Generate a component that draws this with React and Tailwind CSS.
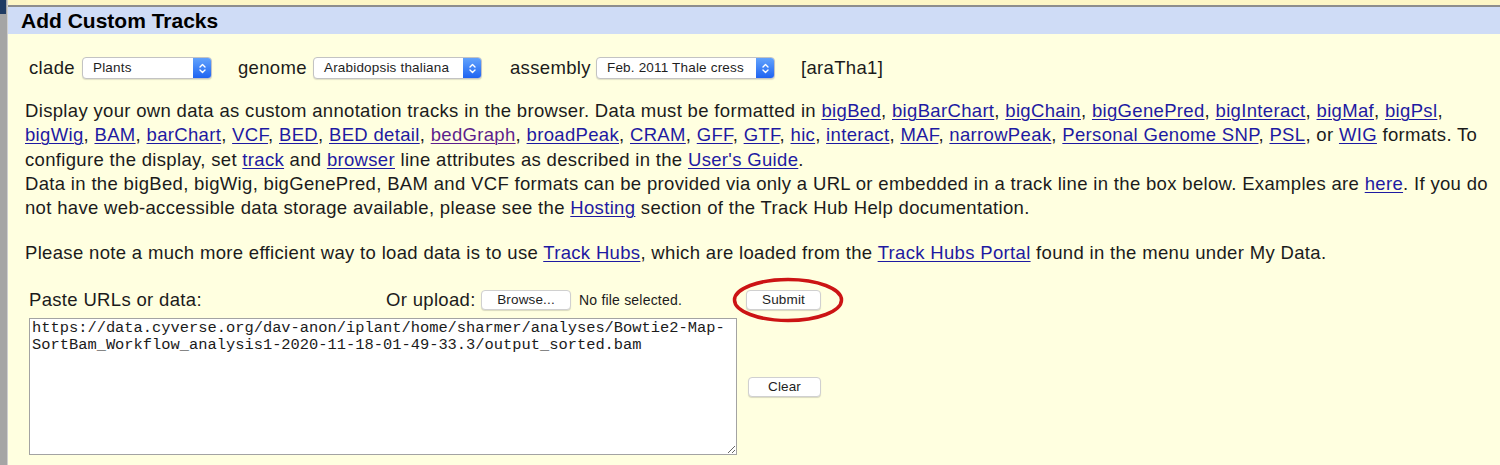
import React from "react";

const FONT = { fontFamily: '"Liberation Sans", Arial, Helvetica, sans-serif' };

function L({ children, v }) {
  return (
    <a
      href="#"
      className={
        v
          ? "text-[#5d1f8d] underline decoration-1 underline-offset-2"
          : "text-[#1e1aa2] underline decoration-1 underline-offset-2"
      }
    >
      {children}
    </a>
  );
}

function Chevrons() {
  return (
    <svg width="9" height="13" viewBox="0 0 9 13" fill="none">
      <path d="M2 5 L4.5 2.5 L7 5" stroke="white" strokeWidth="1.4" strokeLinecap="round" strokeLinejoin="round" />
      <path d="M2 8 L4.5 10.5 L7 8" stroke="white" strokeWidth="1.4" strokeLinecap="round" strokeLinejoin="round" />
    </svg>
  );
}

function MacSelect({ value, className }) {
  return (
    <div
      className={
        "flex h-[22px] items-stretch overflow-hidden rounded-[4px] border border-[#c3c3c3] bg-white shadow-[0_1px_1px_rgba(0,0,0,0.12)] " +
        className
      }
    >
      <div className="flex flex-1 items-center pl-[10px] text-[13.5px] leading-none tracking-[0.18px] text-[#1e1e1e]">
        {value}
      </div>
      <div className="flex w-[18px] items-center justify-center bg-gradient-to-b from-[#62a2fc] to-[#1f62f1]">
        <Chevrons />
      </div>
    </div>
  );
}

function MacButton({ children, className }) {
  return (
    <div
      className={
        "flex items-center justify-center rounded-[4px] border border-[#d0d0d0] bg-white text-[13.5px] leading-none tracking-[0.15px] text-[#1e1e1e] shadow-[0_1px_1px_rgba(0,0,0,0.15)] " +
        className
      }
    >
      {children}
    </div>
  );
}

export default function App() {
  return (
    <div className="flex h-[465px] w-[1500px] overflow-hidden bg-[#ffffe0] text-[#1b1b1b]" style={FONT}>
      <div className="flex w-[7px] flex-col bg-[#a5a5a5]">
        <div className="h-[14px] w-[6px] bg-[#1f3b63]" />
      </div>
      <div className="w-px bg-[#cfcfcf]" />
      <div className="flex flex-1 flex-col">
        <div className="h-[5px] bg-[#fdf6c6]" />
        <div className="h-[2px] bg-[#8d8d8d]" />
        <div className="flex h-[27px] items-center bg-[#cfdcf6] pl-[13px] text-[21px] font-bold leading-none text-black">
          Add Custom Tracks
        </div>

        <div className="mt-[23px] flex items-center pl-[21px] text-[18.5px] leading-none tracking-[0.33px]">
          <span className="w-[53px]">clade</span>
          <MacSelect value="Plants" className="w-[130px]" />
          <span className="ml-[26px] w-[75px]">genome</span>
          <MacSelect value="Arabidopsis thaliana" className="w-[169px]" />
          <span className="ml-[28px] w-[86px]">assembly</span>
          <MacSelect value="Feb. 2011 Thale cress" className="w-[179px]" />
          <span className="ml-[26px]">[araTha1]</span>
        </div>

        <div className="mt-[20px] pl-[17px] text-[18.5px] leading-[24.25px] tracking-[0.33px]">
          <div className="whitespace-nowrap">
            Display your own data as custom annotation tracks in the browser. Data must be formatted in{" "}
            <L>bigBed</L>, <L>bigBarChart</L>, <L>bigChain</L>, <L>bigGenePred</L>, <L>bigInteract</L>, <L>bigMaf</L>,{" "}
            <L>bigPsl</L>,
          </div>
          <div className="whitespace-nowrap">
            <L>bigWig</L>, <L>BAM</L>, <L>barChart</L>, <L>VCF</L>, <L>BED</L>, <L>BED detail</L>, <L v>bedGraph</L>,{" "}
            <L>broadPeak</L>, <L>CRAM</L>, <L>GFF</L>, <L>GTF</L>, <L>hic</L>, <L>interact</L>, <L>MAF</L>,{" "}
            <L>narrowPeak</L>, <L>Personal Genome SNP</L>, <L>PSL</L>, or <L>WIG</L> formats. To
          </div>
          <div className="whitespace-nowrap">
            configure the display, set <L>track</L> and <L>browser</L> line attributes as described in the{" "}
            <L>User's Guide</L>.
          </div>
          <div className="whitespace-nowrap">
            Data in the bigBed, bigWig, bigGenePred, BAM and VCF formats can be provided via only a URL or embedded in a
            track line in the box below. Examples are <L>here</L>. If you do
          </div>
          <div className="whitespace-nowrap">
            not have web-accessible data storage available, please see the <L>Hosting</L> section of the Track Hub Help
            documentation.
          </div>
          <div className="mt-[21px] whitespace-nowrap">
            Please note a much more efficient way to load data is to use <L>Track Hubs</L>, which are loaded from the{" "}
            <L>Track Hubs Portal</L> found in the menu under My Data.
          </div>
        </div>

        <div className="mt-[24px] grid grid-cols-[708px_auto] gap-x-[9px] pl-[21px]">
          <div className="flex h-[21px] items-center text-[18.5px] leading-none tracking-[0.33px]">
            <span className="w-[357px]">Paste URLs or data:</span>
            <span className="w-[95px]">Or upload:</span>
            <MacButton className="h-[20px] w-[90px]">Browse...</MacButton>
            <span className="ml-[8px] text-[14px] tracking-[0.2px]">No file selected.</span>
          </div>
          <div className="relative flex h-[21px] items-center">
            <MacButton className="h-[20px] w-[75px]">Submit</MacButton>
            <svg
              className="pointer-events-none absolute left-[-14px] top-[-13px]"
              width="112"
              height="46"
              viewBox="0 0 112 46"
            >
              <ellipse cx="56" cy="23" rx="53.5" ry="20.5" fill="none" stroke="#cc1414" strokeWidth="3.5" />
            </svg>
          </div>
          <textarea
            readOnly
            className="mt-[7px] h-[137px] w-[708px] resize border border-[#a3a3a3] bg-white px-[2px] py-[1px] text-[15.4px] leading-[17px] text-[#1b1b1b] outline-none"
            style={{ fontFamily: '"Liberation Mono", "Courier New", monospace' }}
            defaultValue={
              "https://data.cyverse.org/dav-anon/iplant/home/sharmer/analyses/Bowtie2-Map-SortBam_Workflow_analysis1-2020-11-18-01-49-33.3/output_sorted.bam"
            }
          />
          <div className="pt-[66px]">
            <MacButton className="ml-[2px] h-[20px] w-[73px]">Clear</MacButton>
          </div>
        </div>
      </div>
    </div>
  );
}
